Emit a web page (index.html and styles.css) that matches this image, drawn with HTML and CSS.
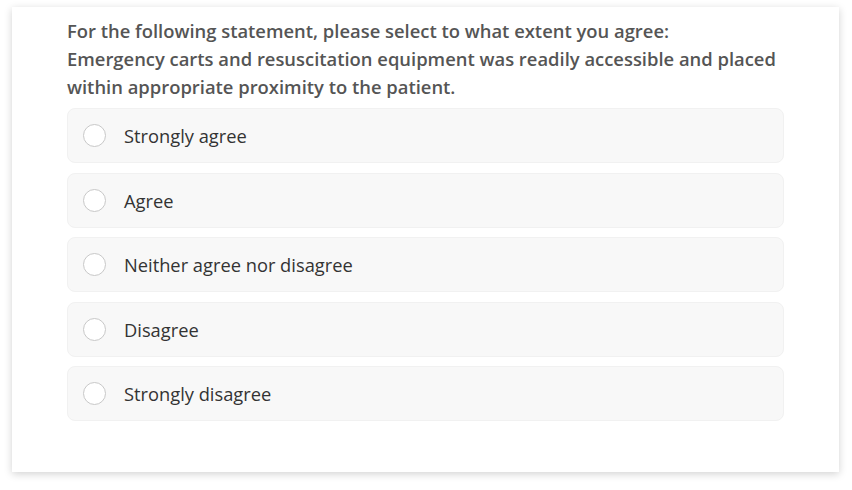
FILE: index.html
```html
<!DOCTYPE html>
<html lang="en">
<head>
<meta charset="utf-8">
<link rel="stylesheet" href="styles.css">
</head>
<body>
<div class="card">
  <p class="question">For the following statement, please select to what extent you agree:<br>Emergency carts and resuscitation equipment was readily accessible and placed within appropriate proximity to the patient.</p>
  <div class="options">
    <label class="option"><span class="radio"></span><span class="label">Strongly agree</span></label>
    <label class="option"><span class="radio"></span><span class="label">Agree</span></label>
    <label class="option"><span class="radio"></span><span class="label">Neither agree nor disagree</span></label>
    <label class="option"><span class="radio"></span><span class="label">Disagree</span></label>
    <label class="option"><span class="radio"></span><span class="label">Strongly disagree</span></label>
  </div>
</div>
</body>
</html>
```
FILE: styles.css
```css
html, body { margin: 0; padding: 0; background: #ffffff; }
body {
  width: 852px;
  height: 490px;
  padding: 7px 0 0 12px;
  box-sizing: border-box;
  font-family: "Open Sans", "Noto Sans", sans-serif;
}
.card {
  width: 827px;
  height: 465px;
  box-sizing: border-box;
  background: #fff;
  padding: 10px 55px 0 55px;
  box-shadow: 0 2px 8px rgba(0,0,0,0.18);
}
.question {
  margin: 0;
  font-size: 18.4px;
  line-height: 28px;
  font-weight: 600;
  color: #555;
}
.options {
  margin-top: 7px;
  display: flex;
  flex-direction: column;
  gap: 9.5px;
}
.option {
  display: flex;
  align-items: center;
  height: 55px;
  box-sizing: border-box;
  padding-left: 15px;
  background: #f8f8f8;
  border: 1px solid #f1f1f1;
  border-radius: 8px;
}
.radio {
  width: 23px;
  height: 23px;
  box-sizing: border-box;
  border: 1.5px solid #c8c8c8;
  border-radius: 50%;
  background: #fff;
  flex: none;
}
.label {
  margin-left: 18px;
  font-size: 18.3px;
  color: #333;
}
```
